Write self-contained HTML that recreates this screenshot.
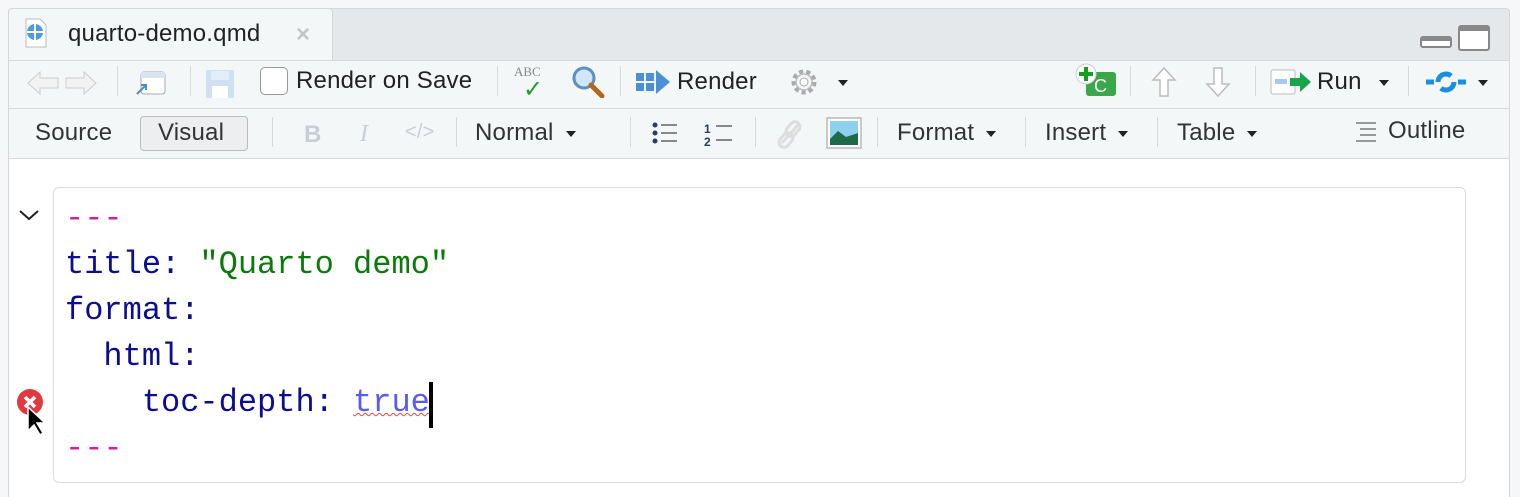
<!DOCTYPE html>
<html><head><meta charset="utf-8"><style>
*{box-sizing:border-box;margin:0;padding:0}
html,body{width:1520px;height:497px;overflow:hidden}
body{background:#f5f7f8;position:relative;font-family:"Liberation Sans",sans-serif;color:#222}
.pane{position:absolute;left:8px;top:8px;width:1502px;height:489px;border:1px solid #d3d7da;border-bottom:none;border-radius:4px 4px 0 0;background:#e5e8ea}
.tab{position:absolute;left:8px;top:8px;width:325px;height:54px;background:#f3f7f8;border:1px solid #d3d7da;border-bottom:none;border-radius:4px 4px 0 0}
.tb{position:absolute;left:9px;width:1500px;background:#f3f7f8;border-top:1px solid #d6dadc}
.t{position:absolute;font-size:24px;white-space:nowrap;letter-spacing:0.2px}
.sep{position:absolute;width:1px;height:30px;background:#d6dadc}
.ed{position:absolute;left:9px;top:158px;width:1500px;height:339px;background:#fff;border-top:1px solid #d6dadc}
.box{position:absolute;left:53px;top:187px;width:1413px;height:296px;border:1.5px solid #dcdcdc;border-radius:6px;background:#fff}
.code{position:absolute;left:65px;font-family:"Liberation Mono",monospace;font-size:32px;white-space:pre;line-height:46px}
.k{color:#0b0e92}.s{color:#0a7a0a}.m{color:#d3209a}.v{color:#5a5cf0}
.dd{display:inline-block;border-left:5px solid transparent;border-right:5px solid transparent;border-top:6px solid #222;vertical-align:middle;margin-left:12px}
</style></head><body>
<div class="pane"></div>
<div class="tab"></div>
<svg style="position:absolute;left:24px;top:18px" width="24" height="30"><path d="M2 1h14l6 6v22H2z" fill="#fff" stroke="#bbb"/><circle cx="11" cy="14" r="8" fill="#4a9be0"/><path d="M11 6v16M3 14h16" stroke="#fff" stroke-width="2"/></svg>
<div class="t" style="left:68px;top:20px">quarto-demo.qmd</div>
<div class="t" style="left:296px;top:21px;color:#c4c4c4;font-weight:bold;font-size:24px">×</div>
<svg style="position:absolute;left:1420px;top:24px" width="72" height="28"><rect x="1" y="13" width="30" height="10" rx="2" fill="#fff" stroke="#888" stroke-width="2"/><rect x="1" y="13" width="30" height="4" fill="#888"/><rect x="39" y="2" width="30" height="24" rx="2" fill="#fff" stroke="#888" stroke-width="2"/><rect x="39" y="2" width="30" height="5" fill="#888"/></svg>
<div class="tb" style="top:60px;height:49px"></div>
<div class="tb" style="top:108px;height:51px"></div>
<svg style="position:absolute;left:26px;top:70px" width="74" height="26" fill="#f2f2f2" stroke="#ccc"><path d="M2 13L14 2v6h18v10H14v6z"/><path d="M70 13L58 2v6H40v10h18v6z"/></svg>
<div class="sep" style="left:117px;top:66px"></div>
<svg style="position:absolute;left:133px;top:68px" width="34" height="30"><rect x="8" y="4" width="24" height="22" rx="3" fill="#fff" stroke="#aaa"/><rect x="8" y="4" width="24" height="6" fill="#d8e4ef"/><path d="M4 26l9-9M8 17h5v5" stroke="#4a90c8" stroke-width="2" fill="none"/></svg>
<div class="sep" style="left:190px;top:66px"></div>
<svg style="position:absolute;left:204px;top:68px" width="32" height="30"><rect x="2" y="2" width="28" height="28" rx="2" fill="#cfe0f2"/><rect x="8" y="18" width="16" height="12" fill="#fff"/><rect x="7" y="3" width="18" height="9" fill="#e4eef8"/></svg>
<div style="position:absolute;left:260px;top:67px;width:28px;height:28px;border:1.5px solid #999;border-radius:5px;background:#fff"></div>
<div class="t" style="left:296px;top:67px">Render on Save</div>
<div class="sep" style="left:497px;top:66px"></div>
<div style="position:absolute;left:514px;top:64px;font-family:'Liberation Serif',serif;font-size:13px;color:#888">ABC</div>
<div style="position:absolute;left:523px;top:75px;color:#1aa12a;font-size:24px">✓</div>
<svg style="position:absolute;left:570px;top:64px" width="36" height="34"><circle cx="14" cy="14" r="10" fill="#cfe6fa" stroke="#5a8fc0" stroke-width="3"/><path d="M21 21l11 11" stroke="#b06a1a" stroke-width="5" stroke-linecap="round"/></svg>
<div class="sep" style="left:620px;top:66px"></div>
<svg style="position:absolute;left:636px;top:70px" width="36" height="24" fill="#4a90d8"><rect x="0" y="3" width="8" height="8"/><rect x="10" y="3" width="8" height="8"/><rect x="0" y="13" width="8" height="8"/><rect x="10" y="13" width="8" height="8"/><path d="M20 0l14 12-14 12z"/></svg>
<div class="t" style="left:677px;top:68px">Render</div>
<svg style="position:absolute;left:788px;top:66px" width="32" height="32"><circle cx="16" cy="16" r="10" fill="none" stroke="#aaa" stroke-width="5" stroke-dasharray="4 3"/><circle cx="16" cy="16" r="8" fill="none" stroke="#bbb" stroke-width="1.5"/><circle cx="16" cy="16" r="4" fill="#fff" stroke="#aaa"/></svg>
<span class="dd" style="position:absolute;left:838px;top:80px;margin:0"></span>
<svg style="position:absolute;left:1074px;top:62px" width="44" height="36"><rect x="12" y="10" width="30" height="24" rx="3" fill="#3aa84a"/><text x="20" y="30" fill="#fff" font-family="Liberation Sans" font-size="18">C</text><circle cx="12" cy="12" r="10" fill="#fff" stroke="#ccc"/><path d="M12 5v14M5 12h14" stroke="#13a01e" stroke-width="4"/></svg>
<div class="sep" style="left:1130px;top:66px"></div>
<svg style="position:absolute;left:1150px;top:66px" width="90" height="32" fill="#fff" stroke="#bbb" stroke-width="1.5"><path d="M14 2L3 14h7v16h8V14h7z"/><path d="M68 30L57 18h7V2h8v16h7z"/></svg>
<div class="sep" style="left:1255px;top:66px"></div>
<svg style="position:absolute;left:1270px;top:68px" width="42" height="28"><rect x="1" y="2" width="24" height="24" rx="2" fill="#fff" stroke="#bbb"/><rect x="5" y="11" width="12" height="5" fill="#a8c8ee"/><path d="M20 10h10V4l11 10-11 10v-6H20z" fill="#19a54a"/></svg>
<div class="t" style="left:1317px;top:68px">Run</div>
<span class="dd" style="position:absolute;left:1379px;top:80px;margin:0"></span>
<div class="sep" style="left:1408px;top:66px"></div>
<svg style="position:absolute;left:1424px;top:66px" width="44" height="32"><path d="M2 16h8M34 16h8" stroke="#1a8ee0" stroke-width="5"/><circle cx="22" cy="16" r="8" fill="none" stroke="#1a8ee0" stroke-width="5" stroke-dasharray="18 7"/></svg>
<span class="dd" style="position:absolute;left:1478px;top:80px;margin:0"></span>
<div class="t" style="left:35px;top:119px;color:#333">Source</div>
<div style="position:absolute;left:140px;top:116px;width:108px;height:35px;border:1.5px solid #bbb;border-radius:4px;background:#eceeef"></div>
<div class="t" style="left:158px;top:119px;color:#333">Visual</div>
<div class="sep" style="left:272px;top:117px"></div>
<div class="t" style="left:304px;top:121px;color:#c5cfd8;font-weight:bold">B</div>
<div class="t" style="left:360px;top:121px;color:#c5cfd8;font-style:italic;font-family:'Liberation Serif',serif">I</div>
<div class="t" style="left:405px;top:121px;color:#c5cfd8;font-size:20px">&lt;/&gt;</div>
<div class="sep" style="left:456px;top:117px"></div>
<div class="t" style="left:475px;top:119px;color:#333">Normal<span class="dd"></span></div>
<div class="sep" style="left:630px;top:117px"></div>
<svg style="position:absolute;left:650px;top:120px" width="90" height="28"><g fill="#2a3a6a"><circle cx="5" cy="5" r="2.5"/><circle cx="5" cy="13" r="2.5"/><circle cx="5" cy="21" r="2.5"/></g><path d="M11 5h16M11 13h16M11 21h16M66 6h16M66 20h16" stroke="#888" stroke-width="2"/><text x="54" y="13" font-size="12" font-weight="bold" fill="#2a3a6a" font-family="Liberation Sans">1</text><text x="54" y="26" font-size="12" font-weight="bold" fill="#2a3a6a" font-family="Liberation Sans">2</text></svg>
<div class="sep" style="left:755px;top:117px"></div>
<svg style="position:absolute;left:774px;top:117px" width="32" height="34"><path d="M8 26l16-18" stroke="#ddd" stroke-width="3"/><rect x="14" y="4" width="10" height="16" rx="5" transform="rotate(40 19 12)" fill="none" stroke="#ddd" stroke-width="3"/><rect x="7" y="15" width="10" height="16" rx="5" transform="rotate(40 12 23)" fill="none" stroke="#ddd" stroke-width="3"/></svg>
<svg style="position:absolute;left:826px;top:117px" width="36" height="32"><rect x="1" y="1" width="34" height="30" fill="#fff" stroke="#999"/><rect x="4" y="4" width="28" height="24" fill="#8fd0f0"/><path d="M4 22l8-8 8 6 12-4v12H4z" fill="#1f6a4a"/></svg>
<div class="sep" style="left:877px;top:117px"></div>
<div class="t" style="left:897px;top:119px;color:#333">Format<span class="dd"></span></div>
<div class="sep" style="left:1025px;top:117px"></div>
<div class="t" style="left:1045px;top:119px;color:#333">Insert<span class="dd"></span></div>
<div class="sep" style="left:1157px;top:117px"></div>
<div class="t" style="left:1177px;top:119px;color:#333">Table<span class="dd"></span></div>
<svg style="position:absolute;left:1354px;top:121px" width="26" height="22" stroke="#999" stroke-width="2"><path d="M2 2h20M6 8h16M6 14h16M2 20h20"/></svg>
<div class="t" style="left:1388px;top:117px;color:#333">Outline</div>
<div class="ed"></div>
<div class="box"></div>
<svg style="position:absolute;left:18px;top:208px" width="22" height="14"><path d="M2 3l9 8 9-8" stroke="#222" stroke-width="2" fill="none"/></svg>
<div class="code" style="top:196px"><span class="m">---</span>
<span class="k">title: </span><span class="s">"Quarto demo"</span>
<span class="k">format:</span>
<span class="k">  html:</span>
<span class="k">    toc-depth: </span><span class="v" style="text-decoration:underline wavy #e44;text-decoration-thickness:1px">true</span>
<span class="m">---</span></div>
<div style="position:absolute;left:429px;top:382px;width:4px;height:46px;background:#000"></div>
<svg style="position:absolute;left:16px;top:387px" width="32" height="56"><circle cx="14" cy="15" r="13" fill="#e03a40"/><path d="M9 10l10 10M19 10L9 20" stroke="#fff" stroke-width="3.5"/><path d="M12 20v24l6-6 6 10 3-2-6-10h8z" fill="#000" stroke="#fff" stroke-width="1.5"/></svg>
</body></html>
